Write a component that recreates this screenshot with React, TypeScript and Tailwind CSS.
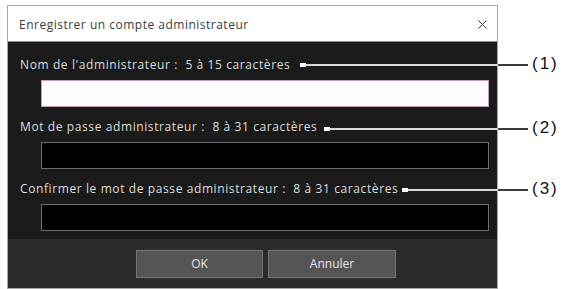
import { X } from "lucide-react";

const fields = [
  { label: "Nom de l'administrateur :  5 à 15 caractères", focused: true },
  { label: "Mot de passe administrateur :  8 à 31 caractères", focused: false },
  {
    label: "Confirmer le mot de passe administrateur :  8 à 31 caractères",
    focused: false,
  },
];

// leader lines for the (n) callouts, pixel positions of the page
const callouts = [
  { n: "(1)", y: 65, from: 300 },
  { n: "(2)", y: 129, from: 324 },
  { n: "(3)", y: 190, from: 402 },
];

export default function App() {
  return (
    <div className="relative h-[289px] w-[562px] overflow-hidden bg-white font-['Open_Sans',sans-serif]">
      <div className="ml-[7px] mt-[5px] flex w-[491px] flex-col border border-[#a8a8a8]">
        <div className="flex h-[36px] items-center justify-between border-b border-[#8a8a8a] bg-white pl-[11px] pr-[7px] pt-[2px]">
          <span className="text-[12px] tracking-[0.5px] text-[#3a3a3a]">
            Enregistrer un compte administrateur
          </span>
          <X className="h-[15px] w-[15px] text-[#333]" strokeWidth={1.6} />
        </div>

        <div className="flex flex-col bg-[#1b1b1b] pb-[8px] pt-[15px]">
          {fields.map((f, i) => (
            <div key={i} className={i === 0 ? "" : "mt-[12px]"}>
              <div className="whitespace-pre pl-[12px] text-[12px] leading-[16px] tracking-[0.6px] text-[#dcdcdc]">
                {f.label}
              </div>
              <div
                className={`ml-[33px] mr-[8px] mt-[7px] h-[27px] border ${
                  f.focused
                    ? "border-[#c39bbd] bg-[#fffcff]"
                    : "border-[#6e6e6e] bg-black"
                }`}
              />
            </div>
          ))}
        </div>

        <div className="flex h-[49px] items-center gap-[5px] bg-[#2b2b2b] pl-[128px]">
          <button className="h-[28px] w-[127px] border border-[#777] bg-[#555] text-[12px] text-[#e6e6e6]">
            OK
          </button>
          <button className="h-[28px] w-[128px] border border-[#777] bg-[#555] text-[12px] text-[#e6e6e6]">
            Annuler
          </button>
        </div>
      </div>

      {callouts.map((c) => (
        <div key={c.n}>
          <div
            className="absolute h-[4px] w-[6px] bg-white"
            style={{ top: c.y - 2, left: c.from }}
          />
          <div
            className="absolute h-[2px] bg-[#d8d8d8]"
            style={{ top: c.y - 1, left: c.from + 6, width: 498 - c.from - 6 }}
          />
          <div
            className="absolute h-[2px] bg-[#3a3a3a]"
            style={{ top: c.y - 1, left: 498, width: 30 }}
          />
          <span
            className="absolute text-[17px] leading-[20px] tracking-[2px] text-[#111] font-['Liberation_Sans',sans-serif]"
            style={{ top: c.y - 11, left: 532 }}
          >
            {c.n}
          </span>
        </div>
      ))}
    </div>
  );
}
